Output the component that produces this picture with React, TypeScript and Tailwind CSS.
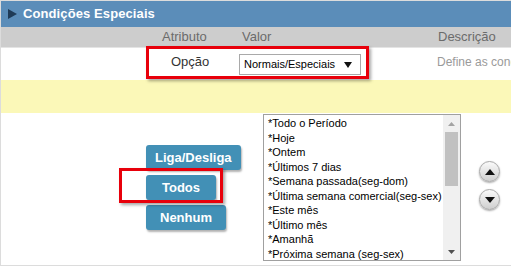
import React from 'react';

const periodos = [
  'Todo o Período',
  'Hoje',
  'Ontem',
  'Últimos 7 dias',
  'Semana passada(seg-dom)',
  'Última semana comercial(seg-sex)',
  'Este mês',
  'Último mês',
  'Amanhã',
  'Próxima semana (seg-sex)',
];

function RoundArrow({ up }: { up?: boolean }) {
  return (
    <div className="w-[21px] h-[21px] rounded-full border border-[#a8a8a8] bg-gradient-to-b from-[#fafafa] to-[#cfcfcf] shadow-[0_1px_2px_rgba(0,0,0,0.35)] flex items-center justify-center">
      <svg width="10" height="6" viewBox="0 0 10 6">
        {up ? <polygon points="0,6 5,0 10,6" fill="#111" /> : <polygon points="0,0 10,0 5,6" fill="#111" />}
      </svg>
    </div>
  );
}

export default function App() {
  return (
    <div className="relative w-[511px] h-[270px] bg-white overflow-hidden font-['Liberation_Sans',Arial,sans-serif]">
      <div className="border-t border-l border-[#dcdcdc] h-[266px] border-b">
        {/* cabeçalho */}
        <div className="h-[26px] bg-[#5b8db9] flex items-center pl-[7px] gap-[6px] text-white">
          <svg width="9" height="10" viewBox="0 0 9 10">
            <polygon points="0,0 9,5 0,10" fill="#1f3b57" />
          </svg>
          <span className="font-bold text-[13px] tracking-[0.1px]">Condições Especiais</span>
        </div>

        {/* colunas */}
        <div className="h-[20px] bg-[#cdcdcd] flex items-center text-[13px] text-[#6b6b6b] whitespace-nowrap">
          <div className="w-[161px] shrink-0" />
          <div className="w-[80px] shrink-0">Atributo</div>
          <div className="w-[196px] shrink-0">Valor</div>
          <div className="shrink-0">Descrição</div>
        </div>

        {/* linha opção */}
        <div className="h-[33px] border-t border-[#e4e4e4] flex items-center whitespace-nowrap">
          <div className="w-[170px] shrink-0" />
          <div className="w-[68px] shrink-0 text-[13px] text-[#333] -mt-[5px]">Opção</div>
          <div className="w-[122px] shrink-0 h-[21px] border border-[#a9a9a9] bg-white flex items-center justify-between pl-[4px] pr-[8px] text-[11px] text-black mt-[1px]">
            <span>Normais/Especiais</span>
            <svg width="8" height="6" viewBox="0 0 8 6">
              <polygon points="0,0 8,0 4,6" fill="#111" />
            </svg>
          </div>
          <div className="w-[76px] shrink-0" />
          <div className="shrink-0 text-[12px] text-[#9a9a9a] -mt-[4px]">Define as condições</div>
        </div>

        {/* faixa amarela */}
        <div className="h-[33px] bg-[#fbf8b8]" />

        {/* períodos */}
        <div className="flex">
          <div className="w-[262px] shrink-0 pl-[145px] pt-[32px] flex flex-col gap-[5px] items-start">
            <button className="h-[25px] px-[9px] rounded-[3px] bg-[#4290b6] text-white font-bold text-[13px] shadow-[1px_2px_2px_rgba(0,0,0,0.3)]">Liga/Desliga</button>
            <button className="h-[25px] px-[16px] rounded-[3px] bg-[#4290b6] text-white font-bold text-[13px] shadow-[1px_2px_2px_rgba(0,0,0,0.3)]">Todos</button>
            <button className="h-[25px] px-[14px] rounded-[3px] bg-[#4290b6] text-white font-bold text-[13px] shadow-[1px_2px_2px_rgba(0,0,0,0.3)]">Nenhum</button>
          </div>

          <div className="mt-[1px] w-[198px] shrink-0 h-[147px] border border-[#a0a0a0] flex overflow-hidden">
            <div className="flex-1 pl-[4px] pt-[1px] text-[11px] leading-[14.5px] text-black whitespace-nowrap overflow-hidden">
              {periodos.map((p) => (
                <div key={p}>*{p}</div>
              ))}
            </div>
            <div className="w-[17px] bg-[#f0f0f0] flex flex-col items-center">
              <div className="h-[17px] flex items-center justify-center">
                <svg width="7" height="4" viewBox="0 0 7 4"><polygon points="0,4 3.5,0 7,4" fill="#a3a3a3" /></svg>
              </div>
              <div className="w-[13px] h-[54px] bg-[#c1c1c1]" />
              <div className="flex-1" />
              <div className="h-[17px] flex items-center justify-center">
                <svg width="7" height="4" viewBox="0 0 7 4"><polygon points="0,0 7,0 3.5,4" fill="#505050" /></svg>
              </div>
            </div>
          </div>

          <div className="pl-[18px] pt-[48px] flex flex-col gap-[7px]">
            <RoundArrow up />
            <RoundArrow />
          </div>
        </div>
      </div>

      {/* marcações em vermelho */}
      <div className="absolute left-[146px] top-[46px] w-[223px] h-[33px] border-[3px] border-[#e8000b] shadow-[2px_2px_3px_rgba(0,0,0,0.35)]" />
      <div className="absolute left-[119px] top-[168px] w-[104px] h-[35px] border-[3px] border-[#e8000b] shadow-[2px_2px_3px_rgba(0,0,0,0.35)]" />
    </div>
  );
}
